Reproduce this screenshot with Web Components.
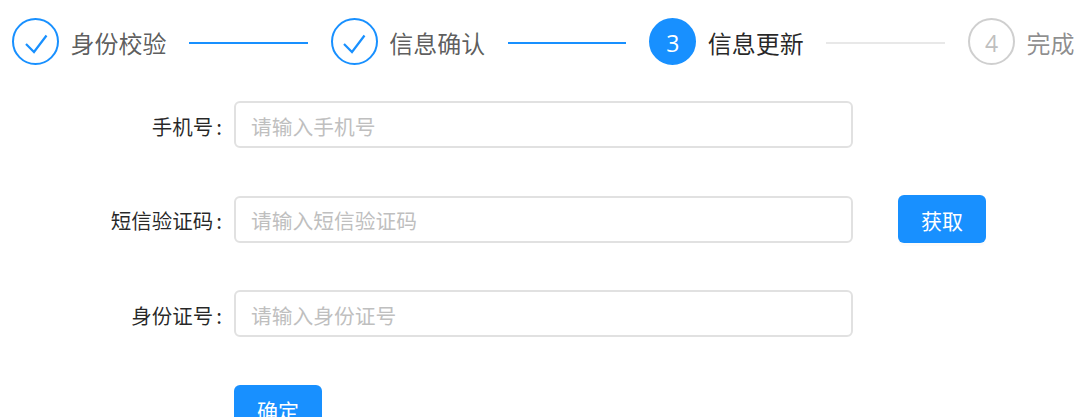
<!DOCTYPE html>
<html lang="zh">
<head>
<meta charset="utf-8">
<title>信息更新</title>
<style>
  html, body { margin: 0; height: 417px; overflow: hidden; background: #fff; }
  body { font-family: "Noto Sans CJK SC", "Open Sans", sans-serif; }
</style>
</head>
<body>
<update-page>
  <step-bar>
    <step-item state="finish" tail="finish">身份校验</step-item>
    <step-item state="finish" tail="finish">信息确认</step-item>
    <step-item state="process" num="3">信息更新</step-item>
    <step-item state="wait" num="4" last>完成</step-item>
  </step-bar>
  <form-row label="手机号" hint="请输入手机号"></form-row>
  <form-row label="短信验证码" hint="请输入短信验证码"><blue-button>获取</blue-button></form-row>
  <form-row label="身份证号" hint="请输入身份证号"></form-row>
  <form-row class="submit"><blue-button slot="field">确定</blue-button></form-row>
</update-page>

<script>
class UpdatePage extends HTMLElement {
  connectedCallback() {
    this.attachShadow({ mode: 'open' });
    this.shadowRoot.innerHTML = `
      <style>
        :host { display: flex; flex-direction: column; gap: 47.5px; width: 1084px; padding-top: 18px; box-sizing: border-box; }
      </style>
      <slot></slot>
    `;
  }
}

class StepBar extends HTMLElement {
  connectedCallback() {
    this.attachShadow({ mode: 'open' });
    this.shadowRoot.innerHTML = `
      <style>
        :host { display: flex; align-items: flex-start; height: 47px; padding-left: 12px; margin-bottom: -11.5px; }
      </style>
      <slot></slot>
    `;
  }
}

class StepItem extends HTMLElement {
  connectedCallback() {
    const state = this.getAttribute('state');
    const num = this.getAttribute('num');
    const last = this.hasAttribute('last');
    const check = `<svg width="24" height="24" viewBox="0 0 24 24" fill="none" stroke="#1890ff" stroke-width="2.2">
        <path d="M2 12 L10 20 L22.5 3.5"/></svg>`;
    this.attachShadow({ mode: 'open' });
    this.shadowRoot.innerHTML = `
      <style>
        :host { display: flex; align-items: center; flex: none; height: 47px; }
        .icon {
          width: 47px; height: 47px; box-sizing: border-box; border-radius: 50%;
          border: 2px solid #1890ff; display: flex; align-items: center; justify-content: center;
          font-family: "Open Sans", sans-serif; font-size: 23px; color: #1890ff;
        }
        .icon svg { margin-top: 4px; }
        .num { padding-top: 2px; }
        .title { margin-left: 11.5px; font-size: 24px; line-height: 47px; padding-top: 1px; color: rgba(0,0,0,.65); white-space: nowrap; }
        .tail { width: 118.67px; height: 2px; margin: 3px 23px 0 22.5px; background: #e8e8e8; }
        :host([tail="finish"]) .tail { background: #1890ff; }
        :host([state="process"]) .icon { background: #1890ff; color: #fff; }
        :host([state="process"]) .title { color: rgba(0,0,0,.85); }
        :host([state="wait"]) .icon { border-color: #cfcfcf; color: #bfbfbf; }
        :host([state="wait"]) .title { color: rgba(0,0,0,.45); }
      </style>
      <div class="icon">${state === 'finish' ? check : `<span class="num">${num}</span>`}</div>
      <div class="title"><slot></slot></div>
      ${last ? '' : '<div class="tail"></div>'}
    `;
  }
}

class FormRow extends HTMLElement {
  connectedCallback() {
    const label = this.getAttribute('label');
    const hint = this.getAttribute('hint');
    this.attachShadow({ mode: 'open' });
    this.shadowRoot.innerHTML = `
      <style>
        :host { display: grid; grid-template-columns: 222px 619px 88px; column-gap: 12px; height: 47px; align-items: center; }
        .label { text-align: right; font-size: 20.5px; padding-top: 2px; color: rgba(0,0,0,.85); white-space: nowrap; }
        .colon { margin-left: 3px; }
        .field {
          height: 47px; box-sizing: border-box; border: 2px solid #e1e1e1; border-radius: 6px;
          padding: 2px 15px 0; display: flex; align-items: center; font-size: 20.75px; color: #bfbfbf; white-space: nowrap;
        }
        .extra { margin: -1px 0 0 33px; }
      </style>
      <div class="label">${label ? `${label}<span class="colon">:</span>` : ''}</div>
      ${hint ? `<div class="field">${hint}</div>` : '<slot name="field"></slot>'}
      <div class="extra"><slot></slot></div>
    `;
  }
}

class BlueButton extends HTMLElement {
  connectedCallback() {
    this.attachShadow({ mode: 'open' });
    this.shadowRoot.innerHTML = `
      <style>
        :host {
          display: flex; width: 88px; height: 48px; box-sizing: border-box; padding-top: 2px; border-radius: 6px;
          background: #1890ff; color: #fff; font-size: 21px; align-items: center; justify-content: center; white-space: nowrap;
          box-shadow: 0 3px 0 rgba(0,0,0,.015);
        }
      </style>
      <slot></slot>
    `;
  }
}

customElements.define('update-page', UpdatePage);
customElements.define('step-bar', StepBar);
customElements.define('step-item', StepItem);
customElements.define('form-row', FormRow);
customElements.define('blue-button', BlueButton);
</script>
</body>
</html>
